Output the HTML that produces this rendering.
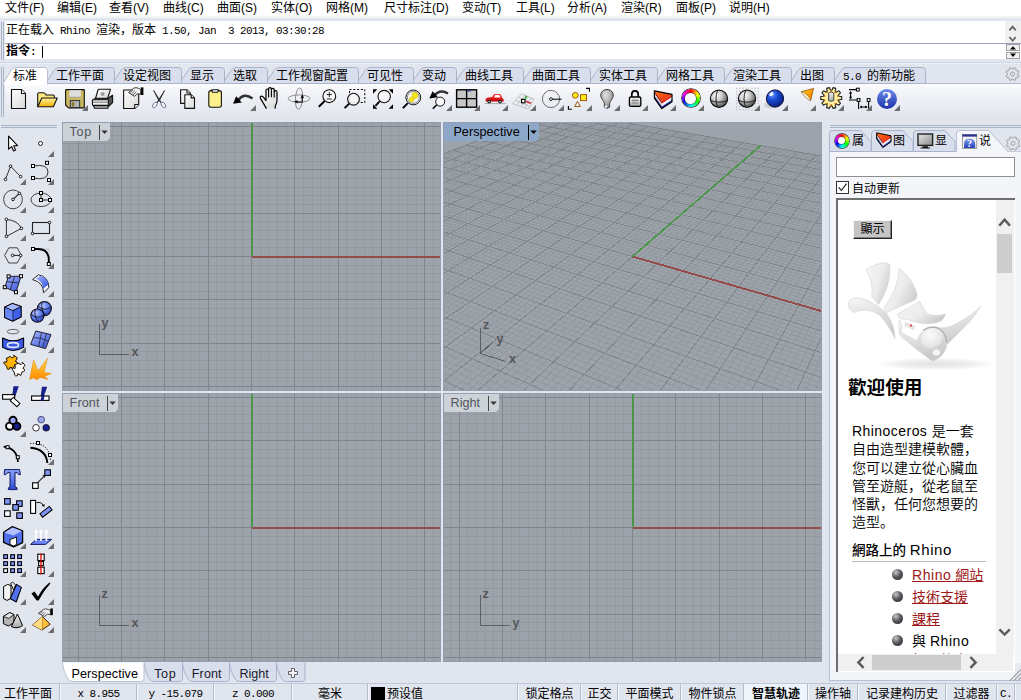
<!DOCTYPE html>
<html lang="zh"><head><meta charset="utf-8"><title>Rhinoceros</title>
<style>
html,body{margin:0;padding:0}
body{width:1021px;height:700px;overflow:hidden;position:relative;background:#e1e5ee;
 font-family:"Liberation Sans","Noto Sans CJK SC",sans-serif;font-size:12px;color:#000}
.a{position:absolute}
.ui{font-family:"Liberation Sans","Noto Sans CJK SC",sans-serif;font-size:12px;white-space:pre}
.sim{font-family:"Liberation Mono","Noto Sans CJK SC",monospace;font-size:11px;letter-spacing:-0.6px;white-space:pre;line-height:14px}
.sim u{text-decoration:none;font-size:12px;letter-spacing:0;font-family:"Liberation Sans","Noto Sans CJK SC",sans-serif}
.menu span{position:absolute;top:1px;line-height:15px;font-size:12px;white-space:pre}
.tab{position:absolute;top:68px;height:17px;line-height:16px;white-space:pre}
.tab span{position:absolute;left:0;top:0}
.vt{position:absolute;font-size:12.6px;line-height:18px;white-space:pre}
.sb{position:absolute;top:687px;height:14px;line-height:15px;white-space:pre;text-align:center}
.sep{position:absolute;top:684px;width:1px;height:16px;background:#b4bccd}
.sep2{position:absolute;top:684px;width:1px;height:16px;background:#f4f6fa}
svg{position:absolute;overflow:hidden;display:block}
.help{font-family:"Liberation Sans","Noto Sans CJK TC",sans-serif}
</style></head><body>
<div class="a" style="left:0;top:0;width:1021px;height:16px;background:#fff"></div>
<div class="a" style="left:0;top:16px;width:1021px;height:2px;background:#f3f4f6"></div>
<div class="a menu" style="left:0;top:0;width:1021px;height:16px">
<span style="left:5px">文件(F)</span>
<span style="left:57px">编辑(E)</span>
<span style="left:109px">查看(V)</span>
<span style="left:163px">曲线(C)</span>
<span style="left:217px">曲面(S)</span>
<span style="left:271px">实体(O)</span>
<span style="left:326px">网格(M)</span>
<span style="left:384px">尺寸标注(D)</span>
<span style="left:462px">变动(T)</span>
<span style="left:516px">工具(L)</span>
<span style="left:567px">分析(A)</span>
<span style="left:621px">渲染(R)</span>
<span style="left:676px">面板(P)</span>
<span style="left:729px">说明(H)</span>
</div>
<div class="a" style="left:1px;top:22px;width:1px;height:38px;background:#a9b3c8"></div>
<div class="a" style="left:3px;top:22px;width:1px;height:38px;background:#a9b3c8"></div>
<div class="a" style="left:5px;top:21px;width:1016px;height:22px;background:#fff"></div>
<div class="a" style="left:5px;top:43px;width:1016px;height:1px;background:#98a3bb"></div>
<div class="a" style="left:5px;top:44px;width:1016px;height:15px;background:#fff"></div>
<div class="a" style="left:1005px;top:21px;width:16px;height:22px;background:#f0f0f0"></div>
<div class="a" style="left:0;top:62px;width:1021px;height:1px;background:#d3d8e4"></div>
<div class="a" style="left:0;top:63px;width:1021px;height:1px;background:#eceff5"></div>
<svg class="a" style="left:1005px;top:21px" width="16" height="39" viewBox="1005 21 16 39"><path d="M1009.4 30.4L1012.6 26.6L1015.8 30.4M1009.4 37L1012.6 40.8L1015.8 37" fill="none" stroke="#606060" stroke-width="1.7"/><rect x="1006.5" y="44.5" width="13" height="6" fill="#f0f0f0" stroke="#a0a0a0" stroke-width="1"/><rect x="1006.5" y="52.5" width="13" height="6" fill="#f0f0f0" stroke="#a0a0a0" stroke-width="1"/><path d="M1010 49.6l3-3.4l3 3.4zM1010 53.6l3 3.4l3-3.4z" fill="#000"/></svg>
<div class="a sim" style="left:6px;top:23px"><u>正在载入</u> Rhino <u>渲染，版本</u> 1.50, Jan  3 2013, 03:30:28</div>
<div class="a sim" style="left:6px;top:44px"><b><u>指令</u>:</b></div>
<div class="a" style="left:42px;top:46px;width:1px;height:12px;background:#000"></div>
<div class="a" style="left:1px;top:67px;width:1px;height:50px;background:#a9b3c8"></div>
<div class="a" style="left:3px;top:67px;width:1px;height:50px;background:#a9b3c8"></div>
<div class="a" style="left:5px;top:84px;width:1016px;height:34px;background:linear-gradient(#fbfcfd,#eef0f5 40%,#e1e5ee)"></div>
<svg class="a" style="left:0;top:64px" width="1021" height="22" viewBox="0 64 1021 22"><path d="M5 83.5H1021" stroke="#b0b9ce" fill="none"/><path d="M832.5 83.5 L841.0 70.5 Q842.8 67.5 846.0 67.5 L922.5 67.5 Q925.5 67.5 925.5 70.5 L925.5 83.5 Z" fill="#d9deec" stroke="#a9b4cc"/><path d="M789.5 83.5 L798.0 70.5 Q799.8 67.5 803.0 67.5 L831.5 67.5 Q834.5 67.5 834.5 70.5 L834.5 83.5 Z" fill="#d9deec" stroke="#a9b4cc"/><path d="M722.5 83.5 L731.0 70.5 Q732.8 67.5 736.0 67.5 L788.5 67.5 Q791.5 67.5 791.5 70.5 L791.5 83.5 Z" fill="#d9deec" stroke="#a9b4cc"/><path d="M655.5 83.5 L664.0 70.5 Q665.8 67.5 669.0 67.5 L721.5 67.5 Q724.5 67.5 724.5 70.5 L724.5 83.5 Z" fill="#d9deec" stroke="#a9b4cc"/><path d="M588.5 83.5 L597.0 70.5 Q598.8 67.5 602.0 67.5 L654.5 67.5 Q657.5 67.5 657.5 70.5 L657.5 83.5 Z" fill="#d9deec" stroke="#a9b4cc"/><path d="M521.5 83.5 L530.0 70.5 Q531.8 67.5 535.0 67.5 L587.5 67.5 Q590.5 67.5 590.5 70.5 L590.5 83.5 Z" fill="#d9deec" stroke="#a9b4cc"/><path d="M454.5 83.5 L463.0 70.5 Q464.8 67.5 468.0 67.5 L520.5 67.5 Q523.5 67.5 523.5 70.5 L523.5 83.5 Z" fill="#d9deec" stroke="#a9b4cc"/><path d="M411.5 83.5 L420.0 70.5 Q421.8 67.5 425.0 67.5 L453.5 67.5 Q456.5 67.5 456.5 70.5 L456.5 83.5 Z" fill="#d9deec" stroke="#a9b4cc"/><path d="M356.5 83.5 L365.0 70.5 Q366.8 67.5 370.0 67.5 L410.5 67.5 Q413.5 67.5 413.5 70.5 L413.5 83.5 Z" fill="#d9deec" stroke="#a9b4cc"/><path d="M265.5 83.5 L274.0 70.5 Q275.8 67.5 279.0 67.5 L355.5 67.5 Q358.5 67.5 358.5 70.5 L358.5 83.5 Z" fill="#d9deec" stroke="#a9b4cc"/><path d="M222.5 83.5 L231.0 70.5 Q232.8 67.5 236.0 67.5 L264.5 67.5 Q267.5 67.5 267.5 70.5 L267.5 83.5 Z" fill="#d9deec" stroke="#a9b4cc"/><path d="M179.5 83.5 L188.0 70.5 Q189.8 67.5 193.0 67.5 L221.5 67.5 Q224.5 67.5 224.5 70.5 L224.5 83.5 Z" fill="#d9deec" stroke="#a9b4cc"/><path d="M112.5 83.5 L121.0 70.5 Q122.8 67.5 126.0 67.5 L178.5 67.5 Q181.5 67.5 181.5 70.5 L181.5 83.5 Z" fill="#d9deec" stroke="#a9b4cc"/><path d="M45.5 83.5 L54.0 70.5 Q55.8 67.5 59.0 67.5 L111.5 67.5 Q114.5 67.5 114.5 70.5 L114.5 83.5 Z" fill="#d9deec" stroke="#a9b4cc"/><path d="M2.5 84.5 L11.0 70.5 Q12.8 67.5 16.0 67.5 L44.5 67.5 Q47.5 67.5 47.5 70.5 L47.5 84.5" fill="#ffffff" stroke="#b7c0d4"/></svg>
<div class="tab sim" style="left:843px">5.0 <u>的新功能</u></div><div class="tab sim" style="left:800px"><u>出图</u></div><div class="tab sim" style="left:733px"><u>渲染工具</u></div><div class="tab sim" style="left:666px"><u>网格工具</u></div><div class="tab sim" style="left:599px"><u>实体工具</u></div><div class="tab sim" style="left:532px"><u>曲面工具</u></div><div class="tab sim" style="left:465px"><u>曲线工具</u></div><div class="tab sim" style="left:422px"><u>变动</u></div><div class="tab sim" style="left:367px"><u>可见性</u></div><div class="tab sim" style="left:276px"><u>工作视窗配置</u></div><div class="tab sim" style="left:233px"><u>选取</u></div><div class="tab sim" style="left:190px"><u>显示</u></div><div class="tab sim" style="left:123px"><u>设定视图</u></div><div class="tab sim" style="left:56px"><u>工作平面</u></div><div class="tab sim" style="left:13px"><u>标准</u></div>
<svg class="a" style="left:1003px;top:65px" width="18" height="18" viewBox="1003 65 18 18"><path d="M1018.9 75.5L1018.1 77.5L1016.6 77.1L1015.6 78.1L1016.0 79.6L1014.0 80.4L1013.2 79.1L1011.8 79.1L1011.0 80.4L1009.0 79.6L1009.4 78.1L1008.4 77.1L1006.9 77.5L1006.1 75.5L1007.4 74.7L1007.4 73.3L1006.1 72.5L1006.9 70.5L1008.4 70.9L1009.4 69.9L1009.0 68.4L1011.0 67.6L1011.8 68.9L1013.2 68.9L1014.0 67.6L1016.0 68.4L1015.6 69.9L1016.6 70.9L1018.1 70.5L1018.9 72.5L1017.6 73.3L1017.6 74.7Z" fill="none" stroke="#9a9a9a" stroke-width="0.9" stroke-linejoin="round"/><circle cx="1012.5" cy="74" r="2.0" fill="none" stroke="#9a9a9a" stroke-width="0.9"/></svg>
<svg class="a" style="left:0;top:84px" width="1021" height="34" viewBox="0 84 1021 34"><defs>
<linearGradient id="gPage" x1="0" y1="0" x2="1" y2="1"><stop offset="0" stop-color="#fff"/><stop offset="1" stop-color="#d8d8d8"/></linearGradient>
<linearGradient id="gFold" x1="0" y1="0" x2="0" y2="1"><stop offset="0" stop-color="#fff3a0"/><stop offset="1" stop-color="#f5b000"/></linearGradient>
<linearGradient id="gGray" x1="0" y1="0" x2="0" y2="1"><stop offset="0" stop-color="#f4f4f4"/><stop offset="1" stop-color="#a8a8a8"/></linearGradient>
<radialGradient id="gSph" cx="0.35" cy="0.3" r="0.75"><stop offset="0" stop-color="#ffffff"/><stop offset="0.45" stop-color="#c8c8c8"/><stop offset="1" stop-color="#4a4a4a"/></radialGradient>
<radialGradient id="gBlue" cx="0.35" cy="0.3" r="0.8"><stop offset="0" stop-color="#5a8cff"/><stop offset="0.4" stop-color="#1848d0"/><stop offset="1" stop-color="#061a70"/></radialGradient>
<radialGradient id="gBulb" cx="0.4" cy="0.3" r="0.8"><stop offset="0" stop-color="#e0e0e0"/><stop offset="0.6" stop-color="#a8a8a8"/><stop offset="1" stop-color="#6c6c6c"/></radialGradient>
<linearGradient id="gHelp" x1="0" y1="0" x2="0" y2="1"><stop offset="0" stop-color="#6a8cec"/><stop offset="1" stop-color="#1c30a8"/></linearGradient>
<linearGradient id="gCone" x1="0" y1="0" x2="1" y2="1"><stop offset="0" stop-color="#ffd000"/><stop offset="1" stop-color="#ff7000"/></linearGradient>
<linearGradient id="gCar" x1="0" y1="0" x2="0" y2="1"><stop offset="0" stop-color="#ff4040"/><stop offset="1" stop-color="#c00000"/></linearGradient>
<linearGradient id="gB" x1="0" y1="0" x2="1" y2="1"><stop offset="0" stop-color="#a8b8ff"/><stop offset="1" stop-color="#3050d8"/></linearGradient>
<linearGradient id="gB2" x1="0" y1="0" x2="0" y2="1"><stop offset="0" stop-color="#8ea4ff"/><stop offset="1" stop-color="#2a48d0"/></linearGradient>
<radialGradient id="gBS" cx="0.35" cy="0.3" r="0.8"><stop offset="0" stop-color="#c0ccff"/><stop offset="0.5" stop-color="#6080f0"/><stop offset="1" stop-color="#2038b0"/></radialGradient>
<linearGradient id="gOr" x1="0" y1="0" x2="0" y2="1"><stop offset="0" stop-color="#ffd840"/><stop offset="1" stop-color="#ff8a00"/></linearGradient>
<radialGradient id="gBul" cx="0.35" cy="0.3" r="0.8"><stop offset="0" stop-color="#d8d8d8"/><stop offset="0.5" stop-color="#707078"/><stop offset="1" stop-color="#303038"/></radialGradient>
<linearGradient id="gLay" x1="0" y1="0" x2="1" y2="1"><stop offset="0" stop-color="#ff7a18"/><stop offset="1" stop-color="#e8200c"/></linearGradient>
</defs><path d="M11.5 89.5H21.5L25.5 93.5V108.5H11.5Z" fill="url(#gPage)" stroke="#111" stroke-width="1.1" stroke-linejoin="round"/><path d="M21.5 89.5V93.5H25.5" fill="#fff" stroke="#111" stroke-width="1.1" stroke-linejoin="round"/><path d="M37.7 106.5V94.2Q37.7 92.8 39 92.8H43.5Q44.8 92.8 45.4 94L46 95H53Q54.3 95 54.3 96.3V98" fill="#ffe880" stroke="#111" stroke-width="1.1" stroke-linejoin="round"/><path d="M37.7 106.7L41.8 98H57.3L53.3 106.7Z" fill="url(#gFold)" stroke="#111" stroke-width="1.1" stroke-linejoin="round"/><path d="M66.5 89.6H84.3V107.9H68.5L65.6 105V90.5Q65.6 89.6 66.5 89.6Z" fill="#c9b660" stroke="#111" stroke-width="1.1" stroke-linejoin="round"/><rect x="69.3" y="90.2" width="11.6" height="7" fill="#dedede"/><path d="M69.3 97.2H80.9" stroke="#9a9a9a" stroke-width="0.8"/><rect x="70.3" y="100.6" width="9.4" height="7" fill="#b4b4b4" stroke="#222" stroke-width="0.9"/><rect x="71.8" y="102" width="2.4" height="4.6" fill="#8a7a30"/><path d="M88.0 111.0h-6l6-6z" fill="#6e6e6e"/><path d="M95.5 98.5L98 90Q98.3 89.3 99 89.3H110.5L107.5 98.5Z" fill="url(#gPage)" stroke="#111" stroke-width="1.1" stroke-linejoin="round"/><rect x="100.8" y="92.3" width="3.6" height="3.4" fill="#9a9a9a"/><path d="M92.6 100.5L95.5 98.2H108L112.6 95.2V102.6L108.5 106.5" fill="#555" stroke="#111" stroke-width="1.1" stroke-linejoin="round"/><rect x="92.4" y="99.8" width="16" height="5.6" rx="0.8" fill="#eee" stroke="#111" stroke-width="1.1" stroke-linejoin="round"/><path d="M93.5 105.6H108V108.3H94.5Z" fill="#bbb" stroke="#111" stroke-width="1.1" stroke-linejoin="round"/><path d="M93 102.2H108" stroke="#666" stroke-width="0.9"/><path d="M123.6 90H138.7V104.5L134.7 108.5H123.6Z" fill="url(#gPage)" stroke="#111" stroke-width="1.1" stroke-linejoin="round"/><path d="M138.7 104.5H134.7V108.5" fill="#fff" stroke="#111" stroke-width="1.1" stroke-linejoin="round"/><path d="M128.5 92.5L133.5 88.3Q136 87 138.5 88.3L140.8 89.5V94.2L137.5 93.8L134.5 96.3Z" fill="#f4f4f4" stroke="#222" stroke-width="0.9"/><path d="M129.8 92.8l3.3-3M131.4 93.9l3.3-3M133 95l3.3-3" stroke="#555" stroke-width="0.9"/><rect x="140.8" y="87.4" width="2.6" height="7.6" fill="#000"/><path d="M153.6 90.4L159.4 99.6L161.6 103.2L158.6 100.2ZM164.6 90.4L158.8 99.6L156.6 103.2L159.6 100.2Z" fill="#222" stroke="#222" stroke-width="0.7" stroke-linejoin="round"/><ellipse cx="154.8" cy="105" rx="1.8" ry="3.2" transform="rotate(33 154.8 105)" fill="#fff" stroke="#6a6a8c" stroke-width="0.9"/><ellipse cx="163.4" cy="105" rx="1.8" ry="3.2" transform="rotate(-33 163.4 105)" fill="#fff" stroke="#6a6a8c" stroke-width="0.9"/><path d="M180.6 89.8H187L190.3 93V103.4H180.6Z" fill="url(#gPage)" stroke="#111" stroke-width="1.1" stroke-linejoin="round"/><path d="M187 89.8V93H190.3" fill="#fff" stroke="#111" stroke-width="1.1" stroke-linejoin="round"/><path d="M184.8 94.7H191.2L194.5 97.9V108.4H184.8Z" fill="url(#gPage)" stroke="#111" stroke-width="1.1" stroke-linejoin="round"/><path d="M191.2 94.7V97.9H194.5" fill="#fff" stroke="#111" stroke-width="1.1" stroke-linejoin="round"/><rect x="208.8" y="90.6" width="12.6" height="16.6" rx="2.2" fill="#fdf08a" stroke="#111" stroke-width="1.1" stroke-linejoin="round"/><path d="M211.8 89.8H218.4L217.6 92.3H212.6Z" fill="#fff" stroke="#111" stroke-width="1.1" stroke-linejoin="round"/><path d="M238 100.5Q244 92 252.5 98.5" fill="none" stroke="#333" stroke-width="2.6"/><path d="M233 103.8L236.2 96.2L241.8 102.4Z" fill="#000"/><path d="M256.0 111.0h-6l6-6z" fill="#6e6e6e"/><path d="M266.5 108.6L260.6 98.6Q259.6 96.6 261.2 96.2Q262.6 96 263.8 97.6L266 100.6V90.6Q266 89 267.3 89Q268.6 89 268.6 90.6V88.9Q268.6 87.6 270 87.6Q271.4 87.6 271.4 88.9V89.6Q271.4 88.4 272.8 88.4Q274.2 88.4 274.2 89.8V91.6Q274.4 90.5 275.7 90.6Q277 90.8 277 92.4V100Q277 103 275.5 105.5L275 108.6" fill="url(#gPage)" stroke="#000" stroke-width="1.2" stroke-linejoin="round"/><path d="M268.6 90.6V97.5M271.4 89.6V97.2M274.2 91.6V97.6" stroke="#000" stroke-width="1.1"/><ellipse cx="299" cy="98.6" rx="10.8" ry="3.7" fill="none" stroke="#777" stroke-width="0.8"/><ellipse cx="299" cy="98.6" rx="3.6" ry="10.7" transform="rotate(4 299 98.6)" fill="none" stroke="#777" stroke-width="0.8"/><path d="M294 101.6L297.6 100.2L297.4 103.6Z" fill="#000"/><path d="M297 102H303" stroke="#000" stroke-width="1"/><path d="M300.6 98.2L302.2 94.2L304 98Z" fill="#000"/><path d="M302.2 97V101.4" stroke="#000" stroke-width="1"/><circle cx="329.3" cy="96.2" r="6.4" fill="#fafafa" stroke="#111" stroke-width="1.1"/><path d="M324.7 101L318.8 106.8" stroke="#000" stroke-width="1.9"/><path d="M326.6 94.6H332M329.3 92V97.2M326.8 99H331.8" stroke="#111" stroke-width="0.9"/><rect x="349.5" y="89.5" width="15.3" height="13" fill="none" stroke="#000" stroke-width="1" stroke-dasharray="2 1.8"/><circle cx="353.5" cy="99.2" r="5.9" fill="#f6f6f6" fill-opacity="0.85" stroke="#111" stroke-width="1.1"/><path d="M349.2 103.6L344.6 108.2" stroke="#000" stroke-width="1.9"/><path d="M373 89.3h4.4l-4.4 4.4zM393 89.3h-4.4l4.4 4.4zM373 108.7h4.4l-4.4-4.4zM393 108.7h-4.4l4.4-4.4z" fill="#000"/><circle cx="384.2" cy="96.6" r="6.2" fill="#f8f8f8" stroke="#111" stroke-width="1.1"/><path d="M379.6 101.4L375.4 105.8" stroke="#000" stroke-width="1.9"/><circle cx="413.3" cy="97.4" r="7.4" fill="#fcfcfc" stroke="#111" stroke-width="1"/><circle cx="413.3" cy="97.4" r="6" fill="#f4f4f4" stroke="#555" stroke-width="0.7"/><circle cx="415" cy="95.4" r="3" fill="#f8e820" stroke="#c8b800" stroke-width="0.5"/><circle cx="411.6" cy="99.6" r="2.5" fill="#f8e820" stroke="#c8b800" stroke-width="0.5"/><path d="M407.8 103.2L402.8 108.2" stroke="#000" stroke-width="1.9"/><path d="M434 96Q440 88.5 448 93.5" fill="none" stroke="#333" stroke-width="2.4"/><path d="M429.3 98.5L432.6 91.2L438 97.2Z" fill="#000"/><circle cx="440.2" cy="101.6" r="4.5" fill="#fafafa" stroke="#111" stroke-width="1"/><path d="M436.8 104.8L432.8 108.8" stroke="#000" stroke-width="1.6"/><path d="M452.0 111.0h-6l6-6z" fill="#6e6e6e"/><rect x="456.6" y="89.8" width="20" height="17.4" fill="#c8c8c8" stroke="#000" stroke-width="1.4"/><path d="M466.6 89.8V107.2M456.6 98.6H476.6" stroke="#000" stroke-width="1.4"/><rect x="467.6" y="90.5" width="3.4" height="1" fill="#2030c0"/><path d="M480.0 111.0h-6l6-6z" fill="#6e6e6e"/><path d="M484.6 103.6H506" stroke="#9a9a9a" stroke-width="0.8"/><path d="M485.8 101.6Q484.8 98.2 488 97.6L492.2 97L493.6 94.6Q494 94 494.8 94H499.6Q500.4 94 500.8 94.6L502 97.4Q504 98.2 503.8 101.6Z" fill="url(#gCar)"/><path d="M495 95H499.4L500.4 97.4H494.2Z" fill="#fff"/><circle cx="489.2" cy="101.6" r="1.9" fill="#222"/><circle cx="489.2" cy="101.6" r="0.8" fill="#ccc"/><circle cx="500" cy="101.6" r="1.9" fill="#222"/><circle cx="500" cy="101.6" r="0.8" fill="#ccc"/><path d="M508.0 111.0h-6l6-6z" fill="#6e6e6e"/><path d="M512.4 103.6L521.4 93.8L534 99.2L528.4 109.2ZM515.4 100.3L529.8 106.6M518.4 97L531.6 103M516.6 105L524.6 95.2M520.8 106.6L528.4 96.8M524.8 108L531.4 98" fill="none" stroke="#b8b8b8" stroke-width="0.8"/><path d="M525 98.6L526.6 96" stroke="#20a020" stroke-width="1.5"/><path d="M525.6 101.4L531 103.4" stroke="#e02020" stroke-width="1.5"/><rect x="521.6" y="99.4" width="3.4" height="3.4" fill="#fff" stroke="#000" stroke-width="1.1"/><path d="M536.0 111.0h-6l6-6z" fill="#6e6e6e"/><circle cx="551" cy="99" r="8.6" fill="none" stroke="#707070" stroke-width="1"/><path d="M552 99.2H561.6" stroke="#111" stroke-width="1.1"/><circle cx="551" cy="99.1" r="1.4" fill="#fff" stroke="#111" stroke-width="0.9"/><path d="M564.0 111.0h-6l6-6z" fill="#6e6e6e"/><circle cx="575.3" cy="95.3" r="2.9" fill="#ffe818" stroke="#a85a10" stroke-width="1"/><rect x="580.5" y="94.6" width="6" height="6" fill="#ffe818" stroke="#a85a10" stroke-width="1"/><path d="M574.6 106.5L577.5 101.3L580.4 106.5Z" fill="none" stroke="#a85a10" stroke-width="1"/><path d="M586 88.4H589.4V91.8M568.4 106V109.3H571.8" fill="none" stroke="#000" stroke-width="1.1"/><path d="M592.0 111.0h-6l6-6z" fill="#6e6e6e"/><path d="M604.4 107.2V103.6Q604.2 101.8 602.4 99.6Q599.8 96.4 601 93.2Q602.6 89.4 607 89.4Q611.4 89.4 613 93.2Q614.2 96.4 611.6 99.6Q609.8 101.8 609.6 103.6V107.2Q607 109.4 604.4 107.2Z" fill="url(#gBulb)" stroke="#3c3c3c" stroke-width="1"/><ellipse cx="606" cy="106.6" rx="1.3" ry="1.2" fill="#fff"/><path d="M620.0 111.0h-6l6-6z" fill="#6e6e6e"/><path d="M631.8 97V94.2Q631.8 90.8 635 90.8Q638.2 90.8 638.2 94.2V97" fill="none" stroke="#000" stroke-width="1.7"/><rect x="629.4" y="97" width="11.4" height="9.4" rx="1.3" fill="url(#gGray)" stroke="#000" stroke-width="1.3"/><path d="M632 100.4H638.2M632 103H638.2" stroke="#808080" stroke-width="1.1"/><path d="M648.0 111.0h-6l6-6z" fill="#6e6e6e"/><path d="M672.0 94.4L661.8 101.2L661.8 103.9L672.0 97.1Z" fill="#e02414"/><path d="M654.4 90.8L661.8 101.2L661.8 103.9L654.4 93.5Z" fill="#a81408"/><path d="M672.0 96.9L661.8 103.7L661.8 106.7L672.0 99.9Z" fill="#f4f4f4"/><path d="M654.4 93.3L661.8 103.7L661.8 106.7L654.4 96.3Z" fill="#d0d0d4"/><path d="M672.0 99.7L661.8 106.5L661.8 108.6L672.0 101.8Z" fill="#2a3cc0"/><path d="M654.4 96.1L661.8 106.5L661.8 108.6L654.4 98.2Z" fill="#16208a"/><path d="M654.4 90.8L672.0 94.4L661.8 101.2Z" fill="url(#gLay)"/><path d="M654.4 90.8L672.0 94.4L672.0 101.8L661.8 108.6L654.4 98.2Z" fill="none" stroke="#000" stroke-width="1.2" stroke-linejoin="round"/><path d="M676.0 111.0h-6l6-6z" fill="#6e6e6e"/><path d="M704.0 111.0h-6l6-6z" fill="#6e6e6e"/><circle cx="719" cy="98.7" r="8.6" fill="url(#gSph)" stroke="#111" stroke-width="1.2"/><path d="M717.6 90.2Q714.4 98.7 717.6 107.2" fill="none" stroke="#222" stroke-width="1"/><path d="M710.6 100.4Q719.0 104 727.4 100.4" fill="none" stroke="#222" stroke-width="1"/><g fill="#c9ccd2"><rect x="736.0" y="87.6" width="1.6" height="1.6"/><rect x="739.0" y="87.6" width="1.6" height="1.6"/><rect x="742.1" y="87.6" width="1.6" height="1.6"/><rect x="745.1" y="87.6" width="1.6" height="1.6"/><rect x="748.2" y="87.6" width="1.6" height="1.6"/><rect x="751.2" y="87.6" width="1.6" height="1.6"/><rect x="754.3" y="87.6" width="1.6" height="1.6"/><rect x="757.4" y="87.6" width="1.6" height="1.6"/><rect x="736.0" y="90.6" width="1.6" height="1.6"/><rect x="739.0" y="90.6" width="1.6" height="1.6"/><rect x="742.1" y="90.6" width="1.6" height="1.6"/><rect x="745.1" y="90.6" width="1.6" height="1.6"/><rect x="748.2" y="90.6" width="1.6" height="1.6"/><rect x="751.2" y="90.6" width="1.6" height="1.6"/><rect x="754.3" y="90.6" width="1.6" height="1.6"/><rect x="757.4" y="90.6" width="1.6" height="1.6"/><rect x="736.0" y="93.7" width="1.6" height="1.6"/><rect x="739.0" y="93.7" width="1.6" height="1.6"/><rect x="742.1" y="93.7" width="1.6" height="1.6"/><rect x="745.1" y="93.7" width="1.6" height="1.6"/><rect x="748.2" y="93.7" width="1.6" height="1.6"/><rect x="751.2" y="93.7" width="1.6" height="1.6"/><rect x="754.3" y="93.7" width="1.6" height="1.6"/><rect x="757.4" y="93.7" width="1.6" height="1.6"/><rect x="736.0" y="96.8" width="1.6" height="1.6"/><rect x="739.0" y="96.8" width="1.6" height="1.6"/><rect x="742.1" y="96.8" width="1.6" height="1.6"/><rect x="745.1" y="96.8" width="1.6" height="1.6"/><rect x="748.2" y="96.8" width="1.6" height="1.6"/><rect x="751.2" y="96.8" width="1.6" height="1.6"/><rect x="754.3" y="96.8" width="1.6" height="1.6"/><rect x="757.4" y="96.8" width="1.6" height="1.6"/><rect x="736.0" y="99.8" width="1.6" height="1.6"/><rect x="739.0" y="99.8" width="1.6" height="1.6"/><rect x="742.1" y="99.8" width="1.6" height="1.6"/><rect x="745.1" y="99.8" width="1.6" height="1.6"/><rect x="748.2" y="99.8" width="1.6" height="1.6"/><rect x="751.2" y="99.8" width="1.6" height="1.6"/><rect x="754.3" y="99.8" width="1.6" height="1.6"/><rect x="757.4" y="99.8" width="1.6" height="1.6"/><rect x="736.0" y="102.8" width="1.6" height="1.6"/><rect x="739.0" y="102.8" width="1.6" height="1.6"/><rect x="742.1" y="102.8" width="1.6" height="1.6"/><rect x="745.1" y="102.8" width="1.6" height="1.6"/><rect x="748.2" y="102.8" width="1.6" height="1.6"/><rect x="751.2" y="102.8" width="1.6" height="1.6"/><rect x="754.3" y="102.8" width="1.6" height="1.6"/><rect x="757.4" y="102.8" width="1.6" height="1.6"/><rect x="736.0" y="105.9" width="1.6" height="1.6"/><rect x="739.0" y="105.9" width="1.6" height="1.6"/><rect x="742.1" y="105.9" width="1.6" height="1.6"/><rect x="745.1" y="105.9" width="1.6" height="1.6"/><rect x="748.2" y="105.9" width="1.6" height="1.6"/><rect x="751.2" y="105.9" width="1.6" height="1.6"/><rect x="754.3" y="105.9" width="1.6" height="1.6"/><rect x="757.4" y="105.9" width="1.6" height="1.6"/><rect x="736.0" y="108.9" width="1.6" height="1.6"/><rect x="739.0" y="108.9" width="1.6" height="1.6"/><rect x="742.1" y="108.9" width="1.6" height="1.6"/><rect x="745.1" y="108.9" width="1.6" height="1.6"/><rect x="748.2" y="108.9" width="1.6" height="1.6"/><rect x="751.2" y="108.9" width="1.6" height="1.6"/><rect x="754.3" y="108.9" width="1.6" height="1.6"/><rect x="757.4" y="108.9" width="1.6" height="1.6"/></g><circle cx="747" cy="98.7" r="8.6" fill="url(#gSph)" stroke="#111" stroke-width="1.2"/><path d="M745.6 90.2Q742.4 98.7 745.6 107.2" fill="none" stroke="#222" stroke-width="1"/><path d="M738.6 100.4Q747.0 104 755.4 100.4" fill="none" stroke="#222" stroke-width="1"/><path d="M760.0 111.0h-6l6-6z" fill="#6e6e6e"/><ellipse cx="772" cy="105" rx="8" ry="3.4" fill="#000" fill-opacity="0.12"/><circle cx="775" cy="98.5" r="8.6" fill="url(#gBlue)" stroke="#0a0a30" stroke-width="1"/><ellipse cx="771.4" cy="94.2" rx="2.4" ry="1.7" transform="rotate(-35 771.4 94.2)" fill="#fff" fill-opacity="0.9"/><path d="M788.0 111.0h-6l6-6z" fill="#6e6e6e"/><path d="M801.4 91.6L813.6 88.4L810.6 100.6Z" fill="url(#gCone)" stroke="#7a4a10" stroke-width="0.7" stroke-linejoin="round"/><path d="M801.4 91.6Q803.4 91.4 807.4 95.2Q811 99 810.6 100.6Q808.6 100.4 805 96.8Q801.2 92.8 801.4 91.6Z" fill="#fff4d0" stroke="#7a4a10" stroke-width="0.6"/><path d="M816.0 111.0h-6l6-6z" fill="#6e6e6e"/><path d="M841.7 96.6L841.7 99.4L839.0 99.7L838.5 101.3L840.5 103.1L838.9 105.3L836.5 103.9L835.2 104.9L835.8 107.6L833.1 108.4L832.0 106.0L830.4 106.0L829.3 108.4L826.6 107.6L827.2 104.9L825.8 103.9L823.5 105.3L821.9 103.1L823.9 101.2L823.4 99.7L820.7 99.4L820.7 96.6L823.4 96.3L823.9 94.7L821.9 92.9L823.5 90.7L825.9 92.1L827.2 91.1L826.6 88.4L829.3 87.6L830.4 90.0L832.0 90.0L833.1 87.6L835.8 88.4L835.2 91.1L836.6 92.1L838.9 90.7L840.5 92.9L838.5 94.8L839.0 96.3Z" fill="#fff2a0" stroke="#222" stroke-width="1.1" stroke-linejoin="round"/><circle cx="837.8" cy="100.1" r="0.9" fill="#d86010"/><circle cx="835.3" cy="103.6" r="0.9" fill="#d86010"/><circle cx="831.2" cy="104.9" r="0.9" fill="#d86010"/><circle cx="827.1" cy="103.6" r="0.9" fill="#d86010"/><circle cx="824.6" cy="100.1" r="0.9" fill="#d86010"/><circle cx="824.6" cy="95.9" r="0.9" fill="#d86010"/><circle cx="827.1" cy="92.4" r="0.9" fill="#d86010"/><circle cx="831.2" cy="91.1" r="0.9" fill="#d86010"/><circle cx="835.3" cy="92.4" r="0.9" fill="#d86010"/><circle cx="837.8" cy="95.9" r="0.9" fill="#d86010"/><path d="M828.6 100.6V94Q828.6 92 831.2 92Q833.8 92 833.8 94V100.6Q831.2 102 828.6 100.6Z" fill="url(#gGray)" stroke="#333" stroke-width="0.9"/><path d="M844.0 111.0h-6l6-6z" fill="#6e6e6e"/><path d="M849 89.6H856.4M849 100H857.4M858.6 101.6V109M868.6 101.6V109M850.6 92V98.4M860.4 107H867" stroke="#000" stroke-width="1.1" fill="none"/><path d="M850.6 91l-1.6 2.4h3.2zM850.6 99.2l-1.6-2.4h3.2zM859.6 107l2.4-1.6v3.2zM867.6 107l-2.4-1.6v3.2z" fill="#000"/><rect x="856.4" y="88.2" width="2.8" height="2.8" fill="#fff" stroke="#000" stroke-width="1"/><rect x="857.2" y="98.6" width="2.8" height="2.8" fill="#fff" stroke="#000" stroke-width="1"/><rect x="867.2" y="98.6" width="2.8" height="2.8" fill="#fff" stroke="#000" stroke-width="1"/><path d="M872.0 111.0h-6l6-6z" fill="#6e6e6e"/><circle cx="887" cy="99" r="10" fill="url(#gHelp)"/><text x="887" y="106" text-anchor="middle" font-family="'Liberation Serif',serif" font-weight="bold" font-size="20" fill="#fff">?</text><path d="M900.0 111.0h-6l6-6z" fill="#6e6e6e"/></svg><div class="a" style="left:681.5px;top:89.3px;width:18px;height:18px;border-radius:50%;background:conic-gradient(#f00,#ff0,#0f0,#0ff,#00f,#f0f,#f00);box-shadow:0 0 0 0.8px #222"></div><div class="a" style="left:685.2px;top:93px;width:10.6px;height:10.6px;border-radius:50%;background:#fff;box-shadow:0 0 0 0.6px #444"></div>
<div class="a" style="left:1px;top:125px;width:56px;height:1px;background:#a9b3c8"></div>
<div class="a" style="left:1px;top:127px;width:56px;height:1px;background:#a9b3c8"></div>
<svg class="a" style="left:0;top:128px" width="60" height="520" viewBox="0 128 60 520"><path d="M8.6 136.2V149.2L11.6 146.6L13.6 151L15.6 150.1L13.7 145.8L17.6 145.6Z" fill="#fff" stroke="#000" stroke-width="1.1" stroke-linejoin="round"/><circle cx="40.5" cy="143.5" r="2" fill="#fff" stroke="#222" stroke-width="1"/><path d="M54.0 157.0h-6l6-6z" fill="#6e6e6e"/><path d="M5.4 179.4L10.6 166.2L20.6 176.6" fill="none" stroke="#333" stroke-width="1"/><circle cx="5.4" cy="179.4" r="1.3" fill="#fff" stroke="#000" stroke-width="0.9"/><circle cx="10.6" cy="166.2" r="1.3" fill="#fff" stroke="#000" stroke-width="0.9"/><circle cx="20.6" cy="176.6" r="1.3" fill="#fff" stroke="#000" stroke-width="0.9"/><path d="M26.0 185.0h-6l6-6z" fill="#6e6e6e"/><path d="M33 166Q48 163.5 48 172Q48 181 33 178" fill="none" stroke="#333" stroke-width="1"/><rect x="31.5" y="164.5" width="3.0" height="3.0" fill="#fff" stroke="#000" stroke-width="1"/><rect x="45.5" y="161.3" width="3.0" height="3.0" fill="#fff" stroke="#000" stroke-width="1"/><rect x="31.5" y="176.5" width="3.0" height="3.0" fill="#fff" stroke="#000" stroke-width="1"/><rect x="47.5" y="178.5" width="3.0" height="3.0" fill="#fff" stroke="#000" stroke-width="1"/><path d="M54.0 185.0h-6l6-6z" fill="#6e6e6e"/><circle cx="13" cy="199.4" r="9.4" fill="none" stroke="#444" stroke-width="1"/><path d="M13 199.4L19.4 193.4" stroke="#222" stroke-width="1.1"/><circle cx="13.0" cy="199.4" r="1.3" fill="#fff" stroke="#000" stroke-width="0.9"/><circle cx="19.4" cy="193.4" r="1.3" fill="#fff" stroke="#000" stroke-width="0.9"/><path d="M26.0 213.0h-6l6-6z" fill="#6e6e6e"/><ellipse cx="41" cy="199.8" rx="10" ry="6.8" fill="none" stroke="#444" stroke-width="1"/><path d="M41 193V200H50" fill="none" stroke="#222" stroke-width="1"/><rect x="39.5" y="191.5" width="3.0" height="3.0" fill="#fff" stroke="#000" stroke-width="1"/><rect x="39.5" y="198.5" width="3.0" height="3.0" fill="#fff" stroke="#000" stroke-width="1"/><rect x="48.5" y="198.5" width="3.0" height="3.0" fill="#fff" stroke="#000" stroke-width="1"/><path d="M54.0 213.0h-6l6-6z" fill="#6e6e6e"/><path d="M6.4 219.4Q18 220.5 21.4 228.4L6.4 236.4Z" fill="none" stroke="#333" stroke-width="1"/><circle cx="6.4" cy="219.4" r="1.3" fill="#fff" stroke="#000" stroke-width="0.9"/><circle cx="21.4" cy="228.4" r="1.3" fill="#fff" stroke="#000" stroke-width="0.9"/><circle cx="6.4" cy="236.4" r="1.3" fill="#fff" stroke="#000" stroke-width="0.9"/><path d="M26.0 241.0h-6l6-6z" fill="#6e6e6e"/><rect x="32.5" y="222.5" width="17" height="11" fill="none" stroke="#222" stroke-width="1.1"/><circle cx="49.5" cy="222.5" r="1.3" fill="#fff" stroke="#000" stroke-width="0.9"/><circle cx="32.5" cy="233.5" r="1.3" fill="#fff" stroke="#000" stroke-width="0.9"/><path d="M54.0 241.0h-6l6-6z" fill="#6e6e6e"/><path d="M4.6 255.4L8.8 247.8H17.2L21.4 255.4L17.2 263H8.8Z" fill="none" stroke="#444" stroke-width="1"/><path d="M12.6 255.4H20.6" stroke="#222" stroke-width="1"/><circle cx="12.6" cy="255.4" r="1.3" fill="#fff" stroke="#000" stroke-width="0.9"/><circle cx="20.6" cy="255.4" r="1.3" fill="#fff" stroke="#000" stroke-width="0.9"/><path d="M26.0 269.0h-6l6-6z" fill="#6e6e6e"/><path d="M33 249H49V264" fill="none" stroke="#c0c0c0" stroke-width="0.9"/><path d="M33 249H38Q48.8 249 48.8 260V264" fill="none" stroke="#000" stroke-width="1.9"/><rect x="31.5" y="247.5" width="3.0" height="3.0" fill="#fff" stroke="#000" stroke-width="1"/><rect x="47.3" y="262.5" width="3.0" height="3.0" fill="#fff" stroke="#000" stroke-width="1"/><path d="M54.0 269.0h-6l6-6z" fill="#6e6e6e"/><path d="M8.6 276.4L21 276.2L16 292.2L4.8 287.2Z" fill="url(#gB)" stroke="#223" stroke-width="1"/><path d="M14.6 276.3L10.4 289.8M6.8 281.6L18.8 283" stroke="#223" stroke-width="0.9" fill="none"/><rect x="7.1" y="274.9" width="3.0" height="3.0" fill="#fff" stroke="#000" stroke-width="1"/><rect x="19.5" y="274.7" width="3.0" height="3.0" fill="#fff" stroke="#000" stroke-width="1"/><rect x="14.5" y="290.7" width="3.0" height="3.0" fill="#fff" stroke="#000" stroke-width="1"/><rect x="3.3" y="285.7" width="3.0" height="3.0" fill="#fff" stroke="#000" stroke-width="1"/><path d="M26.0 297.0h-6l6-6z" fill="#6e6e6e"/><path d="M32.6 279.6L38.4 274.8Q48.6 276.4 48.8 287.6L43.6 292.8Q43.6 282.4 32.6 279.6Z" fill="#fff" stroke="#222" stroke-width="1"/><path d="M35.6 278.2L41.4 275.6Q47.6 278.6 48.6 284.4L43.4 288.6Q42.4 281.6 35.6 278.2Z" fill="url(#gB)"/><path d="M54.0 297.0h-6l6-6z" fill="#6e6e6e"/><path d="M4.6 307.2L12.4 303.4L21.2 306.6V317L12.6 321.2L4.6 317.4Z" fill="#4060e8" stroke="#000" stroke-width="1.1" stroke-linejoin="round"/><path d="M4.6 307.2L12.4 303.4L21.2 306.6L12.8 310.6Z" fill="#a8b8ff" stroke="#000" stroke-width="0.9" stroke-linejoin="round"/><path d="M12.8 310.6V321.2" stroke="#000" stroke-width="0.9"/><path d="M5.2 308L12.5 311V320.4L5.2 317Z" fill="#6a86f4"/><path d="M26.0 325.0h-6l6-6z" fill="#6e6e6e"/><circle cx="44.4" cy="308.6" r="7" fill="url(#gBS)" stroke="#112" stroke-width="1.1"/><path d="M38 306Q44 312 51.2 307M42 302.2Q40.5 309 45.5 315.4" fill="none" stroke="#112" stroke-width="0.9"/><circle cx="37.4" cy="315.6" r="6.6" fill="url(#gBS)" stroke="#112" stroke-width="1.1"/><path d="M31 314Q37 320 44 315M35.4 309.4Q33.6 316 38.4 322" fill="none" stroke="#112" stroke-width="0.9"/><path d="M54.0 325.0h-6l6-6z" fill="#6e6e6e"/><ellipse cx="13" cy="331.6" rx="5.8" ry="2.2" fill="none" stroke="#555" stroke-width="0.9"/><path d="M2.6 338Q13 343.6 23.6 338V347.4Q13 353.6 2.6 347.4Z" fill="#3a58e0" stroke="#001" stroke-width="1.1" stroke-linejoin="round"/><ellipse cx="13" cy="345" rx="5.6" ry="2.4" fill="none" stroke="#e0e8ff" stroke-width="1.6"/><path d="M26.0 353.0h-6l6-6z" fill="#6e6e6e"/><path d="M35.8 331L51 334.6L45.6 348.6L30.6 344.4Z" fill="url(#gB)" stroke="#223" stroke-width="1"/><path d="M33.2 337.6Q41 337 48.4 341.4M41.6 332.4Q40 340 38.6 346.6M46.4 333.6Q44.6 341 42.6 347.6" fill="none" stroke="#223" stroke-width="0.8"/><path d="M54.0 353.0h-6l6-6z" fill="#6e6e6e"/><path d="M3.4 362.6Q5 361 6.4 362.4Q8 359.4 6 358.6L10.4 356.4Q11 358.6 13.2 357.6Q14.6 356.6 13.6 355.2L17.4 357.8L15.4 361.4Q17.6 361.6 17.4 363.6Q17 365 15 364.6L13.2 368.4L10 367Q10.4 369.6 8 369.4Q6.4 369 6.8 366.4Z" fill="#ffb400" stroke="#201000" stroke-width="1" stroke-linejoin="round"/><path d="M11.8 368.6Q13.6 367.4 14.8 368.8Q16.4 366 14.6 364.8L19 363Q19.4 365 21.4 364.4Q23 363.6 22.2 362L25 365.2L22.8 368.4Q25 368.8 24.6 370.8Q24 372 22.2 371.6L20.8 375.4L17.8 373.6Q18 376.4 15.8 376Q14 375.6 14.6 373Z" fill="#fff" stroke="#201000" stroke-width="1" stroke-linejoin="round"/><path d="M29.6 379.4L33.6 360L38 371L47.4 358.4L44 372.6L51.4 373.6L44.6 376.2L48 379.4L40.4 377.6L36.4 379.8L33.6 377.8Z" fill="url(#gOr)" stroke="#e08000" stroke-width="0.5" stroke-linejoin="round"/><path d="M12.2 397L13.4 386.2H18.8L15 397Z" fill="#18208c"/><rect x="2.6" y="394.6" width="12" height="4.6" fill="#fff" stroke="#000" stroke-width="1.1"/><rect x="13.2" y="397.4" width="9" height="4.4" transform="rotate(42 13.2 397.4)" fill="#fff" stroke="#000" stroke-width="1"/><path d="M40.6 397L42 386.8H47.2L43.6 397Z" fill="#18208c"/><rect x="31.6" y="396" width="17.4" height="4.4" fill="#fff" stroke="#000" stroke-width="1.1"/><path d="M41.6 396L40.6 400.4H43.6L44.6 396Z" fill="#18208c"/><circle cx="9.6" cy="426.2" r="3.6" fill="#fff" stroke="#000" stroke-width="1.9"/><circle cx="16.8" cy="426.2" r="3.6" fill="#18208c" stroke="#000" stroke-width="1.9"/><circle cx="13" cy="420.4" r="3.6" fill="#9aa4f0" stroke="#000" stroke-width="1.9"/><path d="M26.0 437.0h-6l6-6z" fill="#6e6e6e"/><circle cx="36" cy="427.8" r="3.3" fill="#fff" stroke="#222" stroke-width="0.9"/><circle cx="46.2" cy="427.8" r="3.3" fill="#18208c" stroke="#112" stroke-width="0.9"/><circle cx="41.2" cy="419.6" r="3.3" fill="#9aa4f0" stroke="#446" stroke-width="0.9"/><path d="M3.6 446.6Q17 448 18 462" fill="none" stroke="#000" stroke-width="1.7"/><rect x="6.1" y="445.7" width="3.0" height="3.0" fill="#fff" stroke="#000" stroke-width="1"/><rect x="16.3" y="455.7" width="3.0" height="3.0" fill="#fff" stroke="#000" stroke-width="1"/><path d="M30.4 447.8Q46 449 47.4 463" fill="none" stroke="#000" stroke-width="1.9"/><path d="M30 443.6Q49 441.6 50.4 460" fill="none" stroke="#000" stroke-width="1" stroke-dasharray="1.2 1.4"/><rect x="36.5" y="441.5" width="3.0" height="3.0" fill="#fff" stroke="#000" stroke-width="1"/><rect x="48.5" y="453.5" width="3.0" height="3.0" fill="#fff" stroke="#000" stroke-width="1"/><path d="M54.0 465.0h-6l6-6z" fill="#6e6e6e"/><path d="M4.6 469.6H19.6L20.4 474.6H18.6Q18 472.2 15 472.2V486Q15 487.6 17 487.8V489.6H8.4V487.8Q10 487.6 10 486V472.2Q6.6 472.2 6 474.6H4.2Z" fill="url(#gB2)" stroke="#101860" stroke-width="1" stroke-linejoin="round"/><path d="M36.6 483.6L45 475.4" stroke="#222" stroke-width="1.1"/><path d="M45.8 474.6L42.4 475.6L44.8 478Z" fill="#222"/><rect x="32.6" y="482.8" width="5.6" height="5.6" fill="#fff" stroke="#000" stroke-width="1.1"/><rect x="44.8" y="469.8" width="5.6" height="5.6" fill="#7e94f4" stroke="#000" stroke-width="1.1"/><path d="M54.0 493.0h-6l6-6z" fill="#6e6e6e"/><rect x="4.6" y="498.6" width="5.6" height="5.6" fill="#7e94f4" stroke="#000" stroke-width="1.1"/><rect x="16.6" y="500.8" width="5.6" height="5.6" fill="#7e94f4" stroke="#000" stroke-width="1.1"/><rect x="12.8" y="504.6" width="5.6" height="5.6" fill="#7e94f4" stroke="#000" stroke-width="1.1"/><rect x="4.6" y="510.8" width="5.6" height="5.6" fill="#fff" stroke="#000" stroke-width="1.1"/><rect x="16.8" y="512.8" width="5.6" height="5.6" fill="#7e94f4" stroke="#000" stroke-width="1.1"/><rect x="30.6" y="500.4" width="5" height="13" fill="#fff" stroke="#000" stroke-width="1.1"/><rect x="40" y="509.6" width="12" height="4.4" transform="rotate(-38 46 511.8)" fill="#7e94f4" stroke="#000" stroke-width="1"/><path d="M36.6 502.6Q41.6 501.6 43.4 505.6" fill="none" stroke="#111" stroke-width="1"/><path d="M44.4 507L41.6 505.6L44.6 504Z" fill="#111"/><path d="M3.6 532.4L12.4 526.6L22.6 530.8V542.6L13.6 547L3.6 542.4Z" fill="#5070ec" stroke="#000" stroke-width="1.3" stroke-linejoin="round"/><path d="M4.4 532.6L12.4 527.6L21.8 531L13.4 535.4Z" fill="#b0c0ff"/><path d="M10 539.6L16.6 537V544.4L13.6 546L10 544.4Z" fill="#fff" stroke="#000" stroke-width="0.9" stroke-linejoin="round"/><path d="M26.0 549.0h-6l6-6z" fill="#6e6e6e"/><path d="M30.6 544.4L36.4 539.4H51.6L45.6 544.4Z" fill="#6a84f4" stroke="#101860" stroke-width="1"/><path d="M36 541V532M41 541V532M46.4 541V532" stroke="#fff" stroke-width="1.7"/><path d="M36 529l-2.2 3.6h4.4zM41 529l-2.2 3.6h4.4zM46.4 529l-2.2 3.6h4.4z" fill="#fff"/><path d="M54.0 549.0h-6l6-6z" fill="#6e6e6e"/><rect x="3.7" y="554.7" width="3.8" height="3.8" fill="#7e94f4" stroke="#000" stroke-width="1.1"/><rect x="10.7" y="554.7" width="3.8" height="3.8" fill="#7e94f4" stroke="#000" stroke-width="1.1"/><rect x="17.7" y="554.7" width="3.8" height="3.8" fill="#7e94f4" stroke="#000" stroke-width="1.1"/><rect x="3.7" y="561.7" width="3.8" height="3.8" fill="#7e94f4" stroke="#000" stroke-width="1.1"/><rect x="10.7" y="561.7" width="3.8" height="3.8" fill="#7e94f4" stroke="#000" stroke-width="1.1"/><rect x="17.7" y="561.7" width="3.8" height="3.8" fill="#7e94f4" stroke="#000" stroke-width="1.1"/><rect x="3.7" y="568.7" width="3.8" height="3.8" fill="#fff" stroke="#000" stroke-width="1.1"/><rect x="10.7" y="568.7" width="3.8" height="3.8" fill="#7e94f4" stroke="#000" stroke-width="1.1"/><rect x="17.7" y="568.7" width="3.8" height="3.8" fill="#7e94f4" stroke="#000" stroke-width="1.1"/><path d="M26.0 577.0h-6l6-6z" fill="#6e6e6e"/><rect x="37.8" y="554.2" width="6.4" height="6.4" fill="#fff" stroke="#000" stroke-width="1.1"/><rect x="38.6" y="561.6" width="4.8" height="4" fill="#fff" stroke="#000" stroke-width="1.1"/><rect x="37.8" y="567.2" width="6.4" height="6.4" fill="#fff" stroke="#000" stroke-width="1.1"/><path d="M41 553.6V574.6" stroke="#e00000" stroke-width="1.3"/><path d="M54.0 577.0h-6l6-6z" fill="#6e6e6e"/><path d="M3.6 586.6L7.6 584.4L11 585.6V598.4L7 600.4L3.6 598.6Z" fill="#f4f4f4" stroke="#000" stroke-width="1" stroke-linejoin="round"/><path d="M10.6 583.4L12.6 582L15.6 585L13.6 590Z" fill="#eee" stroke="#000" stroke-width="0.9" stroke-linejoin="round"/><path d="M16.6 584.4L21.4 587.4L16.2 602L10.2 598.6Z" fill="#5070ec" stroke="#000" stroke-width="1.1" stroke-linejoin="round"/><path d="M26.0 605.0h-6l6-6z" fill="#6e6e6e"/><path d="M31.4 593.6L34.6 591.6L38 596.6Q42.6 588 49.6 582.6L50.4 583.4Q43.6 590.6 38.6 600.6H36.6Z" fill="#000"/><path d="M54.0 605.0h-6l6-6z" fill="#6e6e6e"/><path d="M3.4 616.4L9.6 612.6L14 614.6V622.6L8.4 626L3.4 623.6Z" fill="#b4b4b4" stroke="#000" stroke-width="1" stroke-linejoin="round"/><path d="M3.4 616.4L9.6 612.6L14 614.6L8.6 618.4Z" fill="#e6e6e6" stroke="#000" stroke-width="0.8" stroke-linejoin="round"/><path d="M11.4 626.6L17.4 614L22.6 625.6Q17 629.4 11.4 626.6Z" fill="url(#gGray)" stroke="#000" stroke-width="1" stroke-linejoin="round"/><path d="M26.0 633.0h-6l6-6z" fill="#6e6e6e"/><path d="M38.4 613.4L43.4 609.4Q45.6 608.4 48 609.4L50.4 610.4V614.6L47.4 614.2L44.6 616.4Z" fill="#f4f4f4" stroke="#222" stroke-width="0.8"/><path d="M39.8 613.4l3-2.6M41.2 614.4l3-2.6M42.8 615.4l3-2.6" stroke="#555" stroke-width="0.8"/><rect x="50.4" y="608.4" width="2.4" height="6.8" fill="#000"/><path d="M32.6 625L42.4 616.6L50.2 624.2L42 630Z" fill="#ffc040" stroke="#3a2000" stroke-width="1" stroke-linejoin="round"/><path d="M42.4 616.6L42 630" stroke="#8a5000" stroke-width="0.8"/><path d="M32.6 625L42.4 616.6L42 630Z" fill="#ffdc80"/><path d="M54.0 633.0h-6l6-6z" fill="#6e6e6e"/></svg>
<svg class="a" style="left:62px;top:122px;background:#9da3aa" width="379" height="269" viewBox="0 0 379 269" shape-rendering="crispEdges"><path d="M7.5 0V269M24.5 0V269M33.5 0V269M42.5 0V269M50.5 0V269M68.5 0V269M0 255.5H379M76.5 0V269M0 247.5H379M85.5 0V269M0 238.5H379M94.5 0V269M0 229.5H379M111.5 0V269M0 212.5H379M120.5 0V269M0 203.5H379M128.5 0V269M0 195.5H379M137.5 0V269M0 186.5H379M154.5 0V269M0 169.5H379M163.5 0V269M0 160.5H379M172.5 0V269M0 151.5H379M180.5 0V269M0 143.5H379M198.5 0V269M0 125.5H379M206.5 0V269M0 117.5H379M215.5 0V269M0 108.5H379M224.5 0V269M0 99.5H379M241.5 0V269M0 82.5H379M250.5 0V269M0 73.5H379M258.5 0V269M0 65.5H379M267.5 0V269M0 56.5H379M284.5 0V269M0 39.5H379M293.5 0V269M0 30.5H379M302.5 0V269M0 21.5H379M310.5 0V269M0 13.5H379M328.5 0V269M336.5 0V269M345.5 0V269M354.5 0V269M371.5 0V269" stroke="#93999f" fill="none"/><path d="M16.5 0V269M59.5 0V269M0 264.5H379M102.5 0V269M0 221.5H379M146.5 0V269M0 177.5H379M189.5 0V269M0 134.5H379M232.5 0V269M0 91.5H379M276.5 0V269M0 47.5H379M319.5 0V269M0 4.5H379M362.5 0V269" stroke="#81868c" fill="none"/><rect x="189" y="0" width="2" height="134" fill="#4b964b"/><rect x="190" y="134" width="188" height="2" fill="#964b4b"/><rect x="0.5" y="0.5" width="378" height="268" fill="none" stroke="#949eae"/><path d="M37.5 202V232.5H67" stroke="#5c5f63" fill="none"/><text x="39.5" y="205" font-family="'Liberation Sans',sans-serif" font-weight="bold" font-size="12.5" fill="#54575b" shape-rendering="auto">y</text><text x="69.5" y="234" font-family="'Liberation Sans',sans-serif" font-weight="bold" font-size="12.5" fill="#54575b">x</text><path d="M1 1H48 V16 L45 19 H1Z" fill="#cdd1d8" shape-rendering="auto"/><text x="7.6" y="14" font-family="'Liberation Sans',sans-serif" font-size="12.6" fill="#50555c" letter-spacing="0.7">Top</text><rect x="37" y="3" width="1" height="15" fill="#444"/><path d="M39.4 8.4h6.4l-3.2 3.6z" fill="#333" shape-rendering="auto"/></svg>
<svg class="a" style="left:62px;top:393px;background:#9da3aa" width="379" height="269" viewBox="0 0 379 269" shape-rendering="crispEdges"><path d="M7.5 0V269M24.5 0V269M33.5 0V269M42.5 0V269M50.5 0V269M68.5 0V269M0 255.5H379M76.5 0V269M0 247.5H379M85.5 0V269M0 238.5H379M94.5 0V269M0 229.5H379M111.5 0V269M0 212.5H379M120.5 0V269M0 203.5H379M128.5 0V269M0 195.5H379M137.5 0V269M0 186.5H379M154.5 0V269M0 169.5H379M163.5 0V269M0 160.5H379M172.5 0V269M0 151.5H379M180.5 0V269M0 143.5H379M198.5 0V269M0 125.5H379M206.5 0V269M0 117.5H379M215.5 0V269M0 108.5H379M224.5 0V269M0 99.5H379M241.5 0V269M0 82.5H379M250.5 0V269M0 73.5H379M258.5 0V269M0 65.5H379M267.5 0V269M0 56.5H379M284.5 0V269M0 39.5H379M293.5 0V269M0 30.5H379M302.5 0V269M0 21.5H379M310.5 0V269M0 13.5H379M328.5 0V269M336.5 0V269M345.5 0V269M354.5 0V269M371.5 0V269" stroke="#93999f" fill="none"/><path d="M16.5 0V269M59.5 0V269M0 264.5H379M102.5 0V269M0 221.5H379M146.5 0V269M0 177.5H379M189.5 0V269M0 134.5H379M232.5 0V269M0 91.5H379M276.5 0V269M0 47.5H379M319.5 0V269M0 4.5H379M362.5 0V269" stroke="#81868c" fill="none"/><rect x="189" y="0" width="2" height="134" fill="#4b964b"/><rect x="190" y="134" width="188" height="2" fill="#964b4b"/><rect x="0.5" y="0.5" width="378" height="268" fill="none" stroke="#949eae"/><path d="M37.5 202V232.5H67" stroke="#5c5f63" fill="none"/><text x="39.5" y="205" font-family="'Liberation Sans',sans-serif" font-weight="bold" font-size="12.5" fill="#54575b" shape-rendering="auto">z</text><text x="69.5" y="234" font-family="'Liberation Sans',sans-serif" font-weight="bold" font-size="12.5" fill="#54575b">x</text><path d="M1 1H56 V16 L53 19 H1Z" fill="#cdd1d8" shape-rendering="auto"/><text x="7.6" y="14" font-family="'Liberation Sans',sans-serif" font-size="12.6" fill="#50555c" letter-spacing="0.1">Front</text><rect x="45" y="3" width="1" height="15" fill="#444"/><path d="M47.4 8.4h6.4l-3.2 3.6z" fill="#333" shape-rendering="auto"/></svg>
<svg class="a" style="left:443px;top:393px;background:#9da3aa" width="379" height="269" viewBox="0 0 379 269" shape-rendering="crispEdges"><path d="M7.5 0V269M24.5 0V269M33.5 0V269M42.5 0V269M50.5 0V269M68.5 0V269M0 255.5H379M76.5 0V269M0 247.5H379M85.5 0V269M0 238.5H379M94.5 0V269M0 229.5H379M111.5 0V269M0 212.5H379M120.5 0V269M0 203.5H379M128.5 0V269M0 195.5H379M137.5 0V269M0 186.5H379M154.5 0V269M0 169.5H379M163.5 0V269M0 160.5H379M172.5 0V269M0 151.5H379M180.5 0V269M0 143.5H379M198.5 0V269M0 125.5H379M206.5 0V269M0 117.5H379M215.5 0V269M0 108.5H379M224.5 0V269M0 99.5H379M241.5 0V269M0 82.5H379M250.5 0V269M0 73.5H379M258.5 0V269M0 65.5H379M267.5 0V269M0 56.5H379M284.5 0V269M0 39.5H379M293.5 0V269M0 30.5H379M302.5 0V269M0 21.5H379M310.5 0V269M0 13.5H379M328.5 0V269M336.5 0V269M345.5 0V269M354.5 0V269M371.5 0V269" stroke="#93999f" fill="none"/><path d="M16.5 0V269M59.5 0V269M0 264.5H379M102.5 0V269M0 221.5H379M146.5 0V269M0 177.5H379M189.5 0V269M0 134.5H379M232.5 0V269M0 91.5H379M276.5 0V269M0 47.5H379M319.5 0V269M0 4.5H379M362.5 0V269" stroke="#81868c" fill="none"/><rect x="189" y="0" width="2" height="134" fill="#4b964b"/><rect x="190" y="134" width="188" height="2" fill="#964b4b"/><rect x="0.5" y="0.5" width="378" height="268" fill="none" stroke="#949eae"/><path d="M37.5 202V232.5H67" stroke="#5c5f63" fill="none"/><text x="39.5" y="205" font-family="'Liberation Sans',sans-serif" font-weight="bold" font-size="12.5" fill="#54575b" shape-rendering="auto">z</text><text x="69.5" y="234" font-family="'Liberation Sans',sans-serif" font-weight="bold" font-size="12.5" fill="#54575b">y</text><path d="M1 1H56 V16 L53 19 H1Z" fill="#cdd1d8" shape-rendering="auto"/><text x="7.6" y="14" font-family="'Liberation Sans',sans-serif" font-size="12.6" fill="#50555c" letter-spacing="0">Right</text><rect x="45" y="3" width="1" height="15" fill="#444"/><path d="M47.4 8.4h6.4l-3.2 3.6z" fill="#333" shape-rendering="auto"/></svg>
<svg class="a" style="left:443px;top:122px;background:#9da3aa" width="379" height="269" viewBox="0 0 379 269" shape-rendering="crispEdges"><path d="M-3.0 35.0L93.4 -3.0M-3.0 36.8L97.1 -3.0M-3.0 38.6L100.8 -3.0M-3.0 40.4L104.5 -3.0M-3.0 44.2L111.9 -3.0M-3.0 46.1L115.6 -3.0M-3.0 48.1L119.3 -3.0M-3.0 50.1L123.0 -3.0M-3.0 54.1L130.4 -3.0M-3.0 56.2L134.1 -3.0M-3.0 58.3L137.8 -3.0M-3.0 60.5L141.5 -3.0M-3.0 64.9L148.8 -3.0M-3.0 67.2L152.5 -3.0M-3.0 69.5L156.2 -3.0M-3.0 71.9L159.9 -3.0M-3.0 76.8L165.6 -2.2M-3.0 79.3L168.3 -1.7M-3.0 81.8L171.1 -1.3M-3.0 84.4L173.8 -0.8M-3.0 89.8L179.4 0.1M-3.0 92.5L182.2 0.6M-3.0 95.3L185.0 1.1M-3.0 272.0L-3.0 272.0M-3.0 98.2L187.8 1.6M-3.0 264.2L13.0 272.0M-3.0 104.1L193.5 2.5M-3.0 249.4L44.8 272.0M-3.0 107.2L196.4 3.0M-3.0 242.3L60.7 272.0M-3.0 110.3L199.3 3.5M-3.0 235.5L76.7 272.0M-3.0 113.5L202.2 4.0M-3.0 228.9L92.6 272.0M-3.0 120.0L208.0 5.0M-3.0 216.3L124.4 272.0M-3.0 123.4L211.0 5.5M-3.0 210.2L140.4 272.0M-3.0 126.9L213.9 6.0M-3.0 204.4L156.3 272.0M-3.0 130.4L216.9 6.5M-3.0 198.7L172.2 272.0M-3.0 137.8L222.9 7.5M-3.0 187.8L204.0 272.0M-3.0 141.6L225.9 8.0M-3.0 182.6L220.0 272.0M-3.0 145.4L229.0 8.5M-3.0 177.5L235.9 272.0M-3.0 149.4L232.0 9.1M-3.0 172.6L251.8 272.0M-3.0 157.7L238.2 10.1M-3.0 163.1L283.7 272.0M-3.0 161.9L241.3 10.6M-3.0 158.6L299.6 272.0M-3.0 166.3L244.4 11.2M-3.0 154.1L315.5 272.0M-3.0 170.8L247.6 11.7M-3.0 149.8L331.4 272.0M-3.0 180.2L253.9 12.8M-3.0 141.5L363.3 272.0M-3.0 185.0L257.1 13.3M-3.0 137.5L379.2 272.0M-3.0 190.0L260.3 13.9M-3.0 133.5L382.0 267.4M-3.0 195.1L263.5 14.4M-3.0 129.7L382.0 262.0M-3.0 205.8L270.0 15.5M-3.0 122.3L382.0 251.6M-3.0 211.4L273.3 16.1M-3.0 118.8L382.0 246.5M-3.0 217.1L276.6 16.6M-3.0 115.3L382.0 241.6M-3.0 223.0L279.9 17.2M-3.0 111.9L382.0 236.8M-3.0 235.3L286.6 18.3M-3.0 105.3L382.0 227.4M-3.0 241.7L289.9 18.9M-3.0 102.1L382.0 222.9M-3.0 248.3L293.3 19.5M-3.0 99.0L382.0 218.5M-3.0 255.2L296.7 20.1M-3.0 95.9L382.0 214.2M-3.0 269.5L303.6 21.2M-3.0 90.0L382.0 205.8M3.1 272.0L307.1 21.8M-3.0 87.2L382.0 201.8M12.3 272.0L310.5 22.4M-3.0 84.4L382.0 197.8M21.5 272.0L314.0 23.0M-3.0 81.6L382.0 193.9M39.9 272.0L321.1 24.2M-3.0 76.3L382.0 186.3M49.1 272.0L324.7 24.8M-3.0 73.7L382.0 182.7M58.3 272.0L328.3 25.4M-3.0 71.2L382.0 179.1M67.5 272.0L331.9 26.0M-3.0 68.7L382.0 175.5M85.9 272.0L339.1 27.3M-3.0 63.8L382.0 168.7M95.1 272.0L342.8 27.9M-3.0 61.5L382.0 165.4M104.3 272.0L346.5 28.5M-3.0 59.2L382.0 162.1M113.5 272.0L350.2 29.1M-3.0 56.9L382.0 158.9M131.9 272.0L357.7 30.4M-3.0 52.5L382.0 152.6M141.0 272.0L361.5 31.0M-3.0 50.4L382.0 149.6M150.2 272.0L365.2 31.7M-3.0 48.3L382.0 146.6M159.4 272.0L369.1 32.3M-3.0 46.2L382.0 143.7M177.8 272.0L376.8 33.6M-3.0 42.2L382.0 138.0M187.0 272.0L380.7 34.3M-3.0 40.2L382.0 135.2M196.2 272.0L382.0 38.2M-3.0 38.3L382.0 132.4M205.4 272.0L382.0 44.0M-3.0 36.4L382.0 129.8M223.8 272.0L382.0 56.7M-2.0 32.9L382.0 124.5M233.0 272.0L382.0 63.5M0.9 31.8L382.0 122.0M242.2 272.0L382.0 70.7M3.7 30.7L382.0 119.4M251.4 272.0L382.0 78.4M6.6 29.6L382.0 117.0M269.8 272.0L382.0 95.1M12.1 27.4L382.0 112.1M278.9 272.0L382.0 104.4M14.9 26.3L382.0 109.8M288.1 272.0L382.0 114.2M17.6 25.3L382.0 107.4M297.3 272.0L382.0 124.7M20.3 24.2L382.0 105.2M315.7 272.0L382.0 148.0M25.5 22.1L382.0 100.7M324.9 272.0L382.0 161.1M28.1 21.1L382.0 98.5M334.1 272.0L382.0 175.2M30.7 20.1L382.0 96.3M343.3 272.0L382.0 190.5M33.3 19.1L382.0 94.2M361.7 272.0L382.0 225.3M38.3 17.1L382.0 90.1M370.9 272.0L382.0 245.2M40.8 16.2L382.0 88.1M380.1 272.0L382.0 267.1M43.3 15.2L382.0 86.1M45.7 14.2L382.0 84.1M50.5 12.4L382.0 80.2M52.9 11.4L382.0 78.3M55.2 10.5L382.0 76.5M57.5 9.6L382.0 74.7M62.1 7.8L382.0 71.1M64.4 6.9L382.0 69.3M66.6 6.0L382.0 67.6M68.8 5.2L382.0 65.8M73.2 3.5L382.0 62.5M75.4 2.6L382.0 60.8M77.5 1.8L382.0 59.2M79.7 0.9L382.0 57.6M83.9 -0.7L382.0 54.5M85.9 -1.5L382.0 52.9M88.0 -2.3L382.0 51.4M90.6 -3.0L382.0 49.9M103.4 -3.0L382.0 47.0M109.8 -3.0L382.0 45.5M116.2 -3.0L382.0 44.1M122.6 -3.0L382.0 42.7M135.4 -3.0L382.0 39.9M141.8 -3.0L382.0 38.5M148.2 -3.0L382.0 37.2M154.6 -3.0L382.0 35.8" stroke="#93999f" fill="none"/><path d="M-3.0 33.3L89.7 -3.0M-3.0 42.3L108.2 -3.0M-3.0 52.1L126.7 -3.0M-3.0 62.7L145.1 -3.0M-3.0 74.3L162.9 -2.7M-3.0 87.1L176.6 -0.3M-3.0 101.1L190.7 2.0M-3.0 256.7L28.9 272.0M-3.0 116.7L205.1 4.5M-3.0 222.5L108.5 272.0M-3.0 134.0L219.9 7.0M-3.0 193.2L188.1 272.0M-3.0 153.5L235.1 9.6M-3.0 167.8L267.7 272.0M-3.0 175.4L250.7 12.2M-3.0 145.6L347.4 272.0M-3.0 200.4L266.7 15.0M-3.0 126.0L382.0 256.7M-3.0 229.0L283.2 17.8M-3.0 108.6L382.0 232.0M-3.0 262.2L300.2 20.6M-3.0 93.0L382.0 210.0M30.7 272.0L317.6 23.6M-3.0 78.9L382.0 190.1M76.7 272.0L335.5 26.6M-3.0 66.2L382.0 172.1M122.7 272.0L353.9 29.8M-3.0 54.7L382.0 155.7M168.6 272.0L372.9 33.0M-3.0 44.2L382.0 140.8M214.6 272.0L382.0 50.2M-3.0 34.5L382.0 127.1M260.6 272.0L382.0 86.5M9.4 28.5L382.0 114.5M306.5 272.0L382.0 135.9M22.9 23.2L382.0 102.9M352.5 272.0L382.0 207.1M35.8 18.1L382.0 92.1M48.1 13.3L382.0 82.1M59.8 8.7L382.0 72.8M71.1 4.3L382.0 64.2M81.8 0.1L382.0 56.0M97.0 -3.0L382.0 48.4M129.0 -3.0L382.0 41.3M161.0 -3.0L382.0 34.5" stroke="#81868c" fill="none"/><path d="M189.5 134.0L382.0 189.6M189.5 135.0L382.0 190.6" stroke="#964b4b" stroke-width="1" fill="none"/><path d="M189.5 134.0L317.6 23.1M189.5 135.0L317.6 24.1" stroke="#4b964b" stroke-width="1" fill="none"/><path d="M37.5 206V231.5L62.5 239.5M37.5 231.5L50.5 219.5" stroke="#5c5f63" fill="none"/><text x="40" y="207" font-family="'Liberation Sans',sans-serif" font-weight="bold" font-size="12.5" fill="#54575b">z</text><text x="53.5" y="221" font-family="'Liberation Sans',sans-serif" font-weight="bold" font-size="12.5" fill="#54575b">y</text><text x="66" y="241" font-family="'Liberation Sans',sans-serif" font-weight="bold" font-size="12.5" fill="#54575b">x</text><rect x="0.5" y="0.5" width="378" height="268" fill="none" stroke="#949eae"/><path d="M1 1H96 V16 L93 19 H1Z" fill="#8ca7c8" shape-rendering="auto"/><text x="10.4" y="14" font-family="'Liberation Sans',sans-serif" font-size="12.6" fill="#000" letter-spacing="0.05">Perspective</text><rect x="85" y="3" width="1" height="15" fill="#000"/><path d="M87.4 8.4h6.4l-3.2 3.6z" fill="#000" shape-rendering="auto"/></svg>
<svg class="a" style="left:60px;top:661px" width="260" height="23" viewBox="60 661 260 23"><path d="M276.5 662.5 C277.0 669 279.5 675 282.0 679 Q283.5 681.5 286.5 681.5 L302.0 681.5 Q305.0 681.5 305.0 678.5 L305.0 662.5" fill="#d9deec" stroke="#a9b4cc"/><path d="M229.5 662.5 C230.0 669 232.5 675 235.0 679 Q236.5 681.5 239.5 681.5 L273.5 681.5 Q276.5 681.5 276.5 678.5 L276.5 662.5" fill="#d9deec" stroke="#a9b4cc"/><path d="M182.5 662.5 C183.0 669 185.5 675 188.0 679 Q189.5 681.5 192.5 681.5 L226.5 681.5 Q229.5 681.5 229.5 678.5 L229.5 662.5" fill="#d9deec" stroke="#a9b4cc"/><path d="M144.0 662.5 C144.5 669 147.0 675 149.5 679 Q151.0 681.5 154.0 681.5 L179.5 681.5 Q182.5 681.5 182.5 678.5 L182.5 662.5" fill="#d9deec" stroke="#a9b4cc"/><path d="M62.5 662.5 C63.0 669 65.5 675 68.0 679 Q69.5 681.5 72.5 681.5 L141.0 681.5 Q144.0 681.5 144.0 678.5 L144.0 662.5" fill="#fff" stroke="#b7c0d4"/><path d="M291.5 668.5h3v3h3v3h-3v3h-3v-3h-3v-3h3z" fill="#f4f4f4" stroke="#555" stroke-width="0.9"/></svg>
<div class="vt" style="left:71.6px;top:665px;letter-spacing:0.05px;color:#000">Perspective</div>
<div class="vt" style="left:154.2px;top:665px;letter-spacing:0.6px;color:#1a1a2a">Top</div>
<div class="vt" style="left:191.8px;top:665px;letter-spacing:0.1px;color:#1a1a2a">Front</div>
<div class="vt" style="left:239.4px;top:665px;letter-spacing:0px;color:#1a1a2a">Right</div>
<div class="a" style="left:0;top:683px;width:1021px;height:1px;background:#bfc7d8"></div>
<div class="sep" style="left:59px"></div><div class="sep2" style="left:60px"></div>
<div class="sep" style="left:136px"></div><div class="sep2" style="left:137px"></div>
<div class="sep" style="left:213px"></div><div class="sep2" style="left:214px"></div>
<div class="sep" style="left:291px"></div><div class="sep2" style="left:292px"></div>
<div class="sep" style="left:367px"></div><div class="sep2" style="left:368px"></div>
<div class="sep" style="left:517px"></div><div class="sep2" style="left:518px"></div>
<div class="sep" style="left:580px"></div><div class="sep2" style="left:581px"></div>
<div class="sep" style="left:617px"></div><div class="sep2" style="left:618px"></div>
<div class="sep" style="left:680px"></div><div class="sep2" style="left:681px"></div>
<div class="sep" style="left:743px"></div><div class="sep2" style="left:744px"></div>
<div class="sep" style="left:807px"></div><div class="sep2" style="left:808px"></div>
<div class="sep" style="left:857px"></div><div class="sep2" style="left:858px"></div>
<div class="sep" style="left:945px"></div><div class="sep2" style="left:946px"></div>
<div class="sep" style="left:996px"></div><div class="sep2" style="left:997px"></div>
<div class="sep" style="left:1014px"></div><div class="sep2" style="left:1015px"></div>
<div class="a" style="left:745px;top:684px;width:62px;height:16px;background:#eef4fb"></div>
<div class="sb sim" style="left:4px;width:52px;text-align:left"><u>工作平面</u></div>
<div class="sb sim" style="left:61px;width:75px;">x 8.955</div>
<div class="sb sim" style="left:138px;width:75px;">y -15.079</div>
<div class="sb sim" style="left:215px;width:76px;">z 0.000</div>
<div class="sb sim" style="left:293px;width:74px;"><u>毫米</u></div>
<div class="a" style="left:371px;top:687px;width:14px;height:13px;background:#000"></div>
<div class="sb sim" style="left:387px;width:60px;text-align:left"><u>预设值</u></div>
<div class="sb sim" style="left:519px;width:61px;"><u>锁定格点</u></div>
<div class="sb sim" style="left:582px;width:35px;"><u>正交</u></div>
<div class="sb sim" style="left:619px;width:61px;"><u>平面模式</u></div>
<div class="sb sim" style="left:682px;width:61px;"><u>物件锁点</u></div>
<div class="sb sim" style="left:745px;width:62px;"><b><u>智慧轨迹</u></b></div>
<div class="sb sim" style="left:809px;width:48px;"><u>操作轴</u></div>
<div class="sb sim" style="left:859px;width:86px;"><u>记录建构历史</u></div>
<div class="sb sim" style="left:947px;width:49px;"><u>过滤器</u></div>
<div class="sb sim" style="left:998px;width:16px;">C.</div>
<div class="a" style="left:830px;top:125px;width:191px;height:1px;background:#a9b3c8"></div>
<div class="a" style="left:830px;top:127px;width:191px;height:1px;background:#a9b3c8"></div>
<div class="a" style="left:829px;top:151px;width:192px;height:530px;box-sizing:border-box;background:#f4f5f9;border-left:1px solid #b6c0d4;border-bottom:1px solid #b6c0d4"></div>
<svg class="a" style="left:826px;top:128px" width="195" height="26" viewBox="826 128 195 26"><path d="M829 151.5H1021" stroke="#c3cadb" fill="none"/><path d="M829.5 151.5 V133.5 Q829.5 130.5 832.5 130.5 H861.0 L871.0 141.5 V151.5Z" fill="#d9deec" stroke="#a9b4cc"/><path d="M871.5 151.5 V133.5 Q871.5 130.5 874.5 130.5 H903.0 L913.0 141.5 V151.5Z" fill="#d9deec" stroke="#a9b4cc"/><path d="M913.5 151.5 V133.5 Q913.5 130.5 916.5 130.5 H945.0 L955.0 141.5 V151.5Z" fill="#d9deec" stroke="#a9b4cc"/><path d="M956.5 152 V133.5 Q956.5 130.5 959.5 130.5 H988.5 L1008.5 152" fill="#f5f6fa" stroke="#b7c0d4"/><path d="M891.0 135.8L882.8 141.6L882.8 143.8L891.0 138.0Z" fill="#e02414"/><path d="M876.6 132.8L882.8 141.6L882.8 143.8L876.6 135.0Z" fill="#a81408"/><path d="M891.0 137.8L882.8 143.6L882.8 146.1L891.0 140.3Z" fill="#f4f4f4"/><path d="M876.6 134.8L882.8 143.6L882.8 146.1L876.6 137.3Z" fill="#d0d0d4"/><path d="M891.0 140.1L882.8 145.9L882.8 147.6L891.0 141.8Z" fill="#2a3cc0"/><path d="M876.6 137.1L882.8 145.9L882.8 147.6L876.6 138.8Z" fill="#16208a"/><path d="M876.6 132.8L891.0 135.8L882.8 141.6Z" fill="url(#gLay)"/><path d="M876.6 132.8L891.0 135.8L891.0 141.8L882.8 147.6L876.6 138.8Z" fill="none" stroke="#000" stroke-width="1" stroke-linejoin="round"/><defs><linearGradient id="gMon" x1="0" y1="0" x2="1" y2="1"><stop offset="0" stop-color="#e8e8e8"/><stop offset="1" stop-color="#8a8a8a"/></linearGradient><linearGradient id="gHp" x1="0" y1="0" x2="0" y2="1"><stop offset="0" stop-color="#7a98f0"/><stop offset="1" stop-color="#2840b8"/></linearGradient></defs><rect x="918" y="134" width="14.6" height="11.4" fill="url(#gMon)" stroke="#222" stroke-width="1.4"/><path d="M922.6 146.2H928V147.4H930V148.4H920.6V147.4H922.6Z" fill="#111"/><rect x="962.4" y="134.4" width="14.4" height="14" fill="#f0f0f0" stroke="#8a8a8a" stroke-width="0.8"/><rect x="962.4" y="134.4" width="14.4" height="2.2" fill="#283090"/><path d="M964 148V144.5Q964 138.8 969.6 138.8Q975.2 138.8 975.2 144.5V148Z" fill="url(#gHp)"/><text x="969.6" y="147" text-anchor="middle" font-family="'Liberation Serif',serif" font-weight="bold" font-size="10" fill="#fff">?</text><path d="M1019.6 145.0L1018.8 147.0L1017.2 146.6L1016.2 147.6L1016.6 149.2L1014.6 150.0L1013.8 148.7L1012.2 148.7L1011.4 150.0L1009.4 149.2L1009.8 147.6L1008.8 146.6L1007.2 147.0L1006.4 145.0L1007.7 144.2L1007.7 142.6L1006.4 141.8L1007.2 139.8L1008.8 140.2L1009.8 139.2L1009.4 137.6L1011.4 136.8L1012.2 138.1L1013.8 138.1L1014.6 136.8L1016.6 137.6L1016.2 139.2L1017.2 140.2L1018.8 139.8L1019.6 141.8L1018.3 142.6L1018.3 144.2Z" fill="none" stroke="#9a9a9a" stroke-width="0.9" stroke-linejoin="round"/><circle cx="1013" cy="143.4" r="2.0" fill="none" stroke="#9a9a9a" stroke-width="0.9"/></svg><div class="a" style="left:834.5px;top:133.6px;width:14px;height:14px;border-radius:50%;background:conic-gradient(#f00,#ff0,#0f0,#0ff,#00f,#f0f,#f00);box-shadow:0 0 0 0.7px #222"></div><div class="a" style="left:837.7px;top:136.8px;width:7.6px;height:7.6px;border-radius:50%;background:#fff;box-shadow:0 0 0 0.5px #444"></div>
<div class="a sim" style="left:852px;top:134px"><u>属</u></div>
<div class="a sim" style="left:893px;top:134px"><u>图</u></div>
<div class="a sim" style="left:935px;top:134px"><u>显</u></div>
<div class="a sim" style="left:979px;top:134px"><u>说</u></div>
<div class="a" style="left:836px;top:157px;width:177px;height:18px;background:#fff;border:1px solid #8e8f8f"></div>
<svg class="a" style="left:835px;top:181px" width="15" height="15" viewBox="835 181 15 15"><rect x="836.5" y="181.5" width="12" height="12" fill="#fff" stroke="#333" stroke-width="1"/><path d="M838.6 187.4L841.4 190.4L846.6 183.6" fill="none" stroke="#222" stroke-width="1.2"/></svg>
<div class="a sim" style="left:852px;top:182px"><u>自动更新</u></div>
<div class="a" style="left:836px;top:198px;width:179px;height:474px;background:#fff;border-left:2px solid #6e6e6e;border-top:2px solid #6e6e6e;box-sizing:border-box"></div>
<div class="a" style="left:996px;top:200px;width:18px;height:454px;background:#f0f0f0"></div><div class="a" style="left:997px;top:234px;width:15px;height:39px;background:#cdcdcd"></div><div class="a" style="left:838px;top:654px;width:175px;height:17px;background:#f0f0f0"></div><div class="a" style="left:872px;top:655px;width:89px;height:15px;background:#cdcdcd"></div><svg class="a" style="left:838px;top:200px" width="176" height="472" viewBox="838 200 176 472"><path d="M999.2 225.8L1004.6 219.6L1010 225.8M999.4 629.4L1004.6 634.6L1009.8 629.4M863.6 657L858.4 662.4L863.6 667.8M970.4 657L975.6 662.4L970.4 667.8" fill="none" stroke="#5c5c5c" stroke-width="2.5"/></svg><div class="a" style="left:1015px;top:663px;width:6px;height:17px;background:#e7eaf1"></div><svg class="a" style="left:1006px;top:666px" width="15" height="15" viewBox="1006 666 15 15"><path d="M1009.5 681L1021.5 669M1013.5 681L1021.5 673M1017.5 681L1021.5 677" stroke="#9a9da4" stroke-width="1.2" fill="none"/></svg><div class="a help" style="left:853px;top:220px;width:39px;height:19px;box-sizing:border-box;background:#c4c4c4;border:1px solid;border-color:#f4f4f4 #222 #222 #f4f4f4;font-size:12px;line-height:16px;text-align:center;box-shadow:inset -1px -1px 0 #808080">顯示</div><svg class="a" style="left:840px;top:255px" width="156" height="122" viewBox="840 255 156 122"><defs><linearGradient id="gL1" x1="0" y1="0" x2="1" y2="0.6"><stop offset="0" stop-color="#f6f6f6"/><stop offset="0.6" stop-color="#ececec"/><stop offset="1" stop-color="#cdcdcd"/></linearGradient><linearGradient id="gL2" x1="0" y1="0" x2="0.3" y2="1"><stop offset="0" stop-color="#f7f7f7"/><stop offset="1" stop-color="#cacaca"/></linearGradient><radialGradient id="gL3" cx="0.4" cy="0.35" r="0.7"><stop offset="0" stop-color="#fbfbfb"/><stop offset="0.7" stop-color="#e6e6e6"/><stop offset="1" stop-color="#c4c4c4"/></radialGradient><radialGradient id="gSh" cx="0.5" cy="0.5" r="0.5"><stop offset="0" stop-color="#e2e2e2"/><stop offset="0.6" stop-color="#efefef"/><stop offset="1" stop-color="#ffffff"/></radialGradient></defs><ellipse cx="936" cy="364" rx="60" ry="6.5" fill="url(#gSh)"/><g stroke="#d2d2d2" stroke-width="0.6" stroke-linejoin="round"><path d="M865.7 269.6Q876 263 886.3 262.7L889.7 264.4Q890.5 278 886.3 289.3Q883 298 878.6 304.7L871.7 296.2Q873 288 870.9 280.7Q869 274 865.7 269.6Z" fill="url(#gL1)"/><path d="M899.2 268.7Q907 274 912 282.4Q916 289 917.2 295.3L915.5 299.6L886.3 312.5L883.7 308.2Q891 299 894.9 289.3Q898 280 899.2 268.7Z" fill="url(#gL1)"/><path d="M848.6 306.5Q848 302 850.3 299.6Q854 297.4 858.9 297.9Q867 299 874.3 303.9Q881 308 886.3 313.3Q891 319 893.2 327Q895 333 894.9 339Q893 333 889.7 328.8Q885.5 321 879.5 315Q873 310.5 865.7 309.9Q859 310 853.7 312.5Q850 310.5 848.6 306.5Z" fill="url(#gL2)"/><path d="M897.5 314.2L919.8 301.3Q923 309 927.5 314.2Q936 317 945.5 314.2Q944 318.5 941.2 321Q935.5 323.6 929.2 323.6Q922 324 915.5 321.9Q907 319 900 318.5Z" fill="url(#gL1)"/><path d="M936 327Q943 329 950 326.5Q966 320 980.7 306.5Q972 321 960 331.5Q953.5 338 947.2 344.2Q944 334 936 327Z" fill="url(#gL2)"/><path d="M899.2 320.2Q901.5 322 901.8 325L901.6 332.5L917 341Q919 333 925 329Q932 325 939 328Q946.5 333 946.8 344Q946 352 939.5 357.5L933.5 361L930 359.5L915.5 348.6L899.6 335Q898.6 327 899.2 320.2Z" fill="url(#gL2)"/></g><circle cx="932.6" cy="338.6" r="11.6" fill="url(#gL3)"/><path d="M923 330.5Q932 324.5 940.5 329.5Q946.5 334.5 946.6 343" fill="none" stroke="#aeaeae" stroke-width="1.2"/><ellipse cx="936.4" cy="352.4" rx="4" ry="3.4" fill="#f4f4f4" stroke="#d0d0d0" stroke-width="0.6"/><path d="M905.6 322.6L914.6 326.4L913.4 329.6L905 325.6Z" fill="#f0e4e4" stroke="#c8c8c8" stroke-width="0.5"/><rect x="910" y="324.6" width="1.8" height="1.8" fill="#d82020"/></svg><div class="a help" style="left:848px;top:376px;font-size:18.6px;line-height:24px;font-weight:700;white-space:pre">歡迎使用</div><div class="a help" style="left:852px;top:422px;width:140px;font-size:14px;line-height:18.3px;white-space:pre;font-weight:350"><span style="letter-spacing:0.45px">Rhinoceros </span>是一套
自由造型建模軟體，
您可以建立從心臟血
管至遊艇，從老鼠至
怪獸，任何您想要的
造型。</div><div class="a help" style="left:852px;top:541px;font-size:13.5px;line-height:18px;white-space:pre;font-weight:500">網路上的 <span style="font-size:15px;letter-spacing:0.6px">Rhino</span></div><div class="a" style="left:852px;top:561px;width:134px;height:1px;background:#b8b8b8"></div><div class="a" style="left:892px;top:569px;width:11px;height:11px;border-radius:50%;background:radial-gradient(circle at 35% 30%,#c8c8c8,#5a5a60 45%,#1c1c22)"></div><div class="a help" style="left:912px;top:565px;font-size:14px;line-height:20px;white-space:pre;color:#a01818;text-decoration:underline"><span style="letter-spacing:0.55px">Rhino</span> 網站</div><div class="a" style="left:892px;top:591px;width:11px;height:11px;border-radius:50%;background:radial-gradient(circle at 35% 30%,#c8c8c8,#5a5a60 45%,#1c1c22)"></div><div class="a help" style="left:912px;top:587px;font-size:14px;line-height:20px;white-space:pre;color:#a01818;text-decoration:underline">技術支援</div><div class="a" style="left:892px;top:613px;width:11px;height:11px;border-radius:50%;background:radial-gradient(circle at 35% 30%,#c8c8c8,#5a5a60 45%,#1c1c22)"></div><div class="a help" style="left:912px;top:609px;font-size:14px;line-height:20px;white-space:pre;color:#a01818;text-decoration:underline">課程</div><div class="a" style="left:892px;top:635px;width:11px;height:11px;border-radius:50%;background:radial-gradient(circle at 35% 30%,#c8c8c8,#5a5a60 45%,#1c1c22)"></div><div class="a help" style="left:912px;top:631px;font-size:14px;line-height:20px;white-space:pre;color:#000">與 <span style="letter-spacing:0.55px">Rhino</span></div><div class="a help" style="left:912px;top:649.5px;height:4.3px;overflow:hidden;font-size:14px;line-height:20px;white-space:pre;color:#a01818">相關的產品</div>
</body></html>
